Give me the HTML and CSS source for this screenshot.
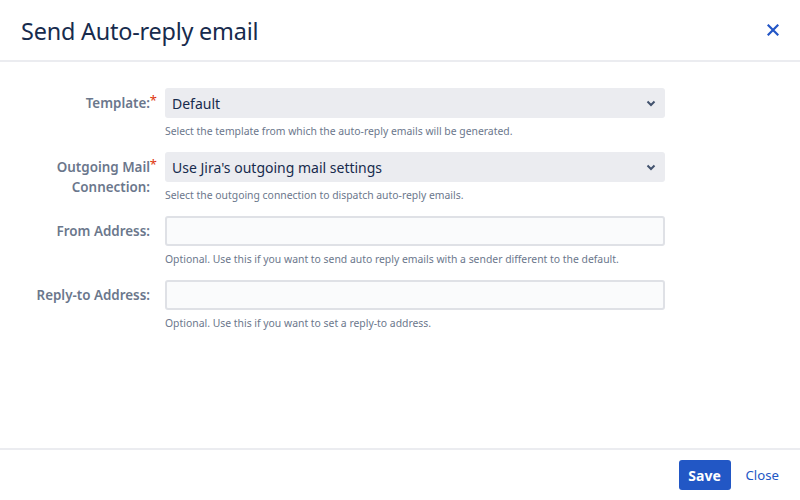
FILE: index.html
```html
<!DOCTYPE html>
<html lang="en">
<head>
<meta charset="utf-8">
<title>Send Auto-reply email</title>
<link rel="stylesheet" href="styles.css">
</head>
<body>
<div class="dialog">
  <header class="dialog-header">
    <h2 class="dialog-title">Send Auto-reply email</h2>
    <button class="close-icon" aria-label="Close">
      <svg width="12" height="12" viewBox="0 0 12 12"><path d="M1.5 1.5 L10.5 10.5 M10.5 1.5 L1.5 10.5" stroke="#2356c6" stroke-width="2.2" stroke-linecap="square" fill="none"/></svg>
    </button>
  </header>
  <main class="dialog-body">
    <form class="form">
      <div class="row">
        <label class="label"><span class="label-text">Template:<span class="req">*</span></span></label>
        <div class="field">
          <div class="select"><span>Default</span><svg class="chev" width="10" height="7" viewBox="0 0 10 7"><path d="M1.5 1.5 L5 5 L8.5 1.5" stroke="#42526e" stroke-width="2" fill="none"/></svg></div>
          <div class="help">Select the template from which the auto-reply emails will be generated.</div>
        </div>
      </div>
      <div class="row">
        <label class="label"><span class="label-text">Outgoing Mail<span class="req">*</span><br>Connection:</span></label>
        <div class="field">
          <div class="select"><span>Use Jira's outgoing mail settings</span><svg class="chev" width="10" height="7" viewBox="0 0 10 7"><path d="M1.5 1.5 L5 5 L8.5 1.5" stroke="#42526e" stroke-width="2" fill="none"/></svg></div>
          <div class="help">Select the outgoing connection to dispatch auto-reply emails.</div>
        </div>
      </div>
      <div class="row">
        <label class="label"><span class="label-text">From Address:</span></label>
        <div class="field">
          <div class="input"></div>
          <div class="help">Optional. Use this if you want to send auto reply emails with a sender different to the default.</div>
        </div>
      </div>
      <div class="row">
        <label class="label"><span class="label-text">Reply-to Address:</span></label>
        <div class="field">
          <div class="input"></div>
          <div class="help">Optional. Use this if you want to set a reply-to address.</div>
        </div>
      </div>
    </form>
  </main>
  <footer class="dialog-footer">
    <button class="btn-primary">Save</button>
    <a class="link" href="#">Close</a>
  </footer>
</div>
</body>
</html>
```
FILE: styles.css
```css
* { box-sizing: border-box; }
html, body { margin: 0; padding: 0; }
body {
  background: #fff;
  font-family: "Noto Sans", "Open Sans", sans-serif;
  color: #172b4d;
}
.dialog {
  width: 800px;
  height: 500px;
  display: flex;
  flex-direction: column;
}
.dialog-header {
  height: 62px;
  border-bottom: 2px solid #ebecf0;
  display: flex;
  align-items: center;
  justify-content: space-between;
  padding: 2px 21px 0 21px;
}
.dialog-title {
  margin: 0;
  font-size: 23.4px;
  font-weight: 400;
  color: #172b4d;
  letter-spacing: -0.2px;
}
.close-icon {
  border: 0;
  background: none;
  padding: 0;
  width: 12px;
  height: 12px;
  display: flex;
  margin-top: -2px;
}
.dialog-body {
  flex: 1;
  padding-top: 26px;
}
.form {
  display: flex;
  flex-direction: column;
  gap: 15px;
}
.row {
  display: grid;
  grid-template-columns: 150px 500px;
  column-gap: 15px;
}
.label {
  text-align: right;
  font-size: 13.4px;
  font-weight: 600;
  color: #6b778c;
  line-height: 20px;
  padding-top: 5px;
}
.label-text { position: relative; display: inline-block; }
.req {
  position: absolute;
  right: -7px;
  top: -3px;
  color: #de350b;
  font-size: 13px;
  font-weight: 400;
}
.select {
  height: 30px;
  background: #ebecf0;
  border-radius: 3px;
  display: flex;
  align-items: center;
  justify-content: space-between;
  padding: 0 9px 0 7px;
  font-size: 14px;
  color: #172b4d;
}
.input {
  height: 30px;
  background: #fafbfc;
  border: 2px solid #dfe1e6;
  border-radius: 3px;
}
.help {
  margin-top: 7px;
  font-size: 10.4px;
  line-height: 12px;
  color: #6b778c;
}
.dialog-footer {
  height: 52px;
  border-top: 2px solid #ebecf0;
  display: flex;
  align-items: center;
  justify-content: flex-end;
  padding-right: 21px;
  gap: 15px;
}
.btn-primary {
  height: 30px;
  width: 52px;
  border: 0;
  border-radius: 3px;
  background: #2257c5;
  color: #fff;
  font-family: inherit;
  font-size: 14px;
  font-weight: 700;
  padding: 0;
}
.link {
  color: #2257c5;
  font-size: 13.2px;
  text-decoration: none;
}
```
